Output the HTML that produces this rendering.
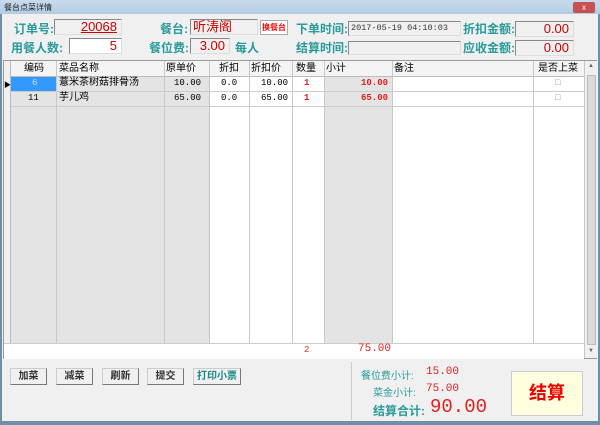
<!DOCTYPE html><html><head><meta charset="utf-8"><style>
*{margin:0;padding:0;box-sizing:border-box}
body{width:600px;height:425px;overflow:hidden;background:#6f8fa8;font-family:"Liberation Sans","Noto Sans CJK SC",sans-serif;position:relative}
div{position:absolute}
.t{font-size:12px;color:#2a9a9a;font-weight:bold;white-space:nowrap}
.box{background:#f0f0f0;border:1px solid #888;border-right-color:#ddd;border-bottom-color:#ddd;font-size:13px;text-align:right;padding-right:4px;line-height:14px;color:#c00;white-space:nowrap;overflow:hidden}
.c{border-right:1px solid #c8c8c8;top:0;bottom:0}
.cell{font-size:9px;line-height:15px;white-space:nowrap;font-family:"Liberation Mono","Noto Sans CJK SC",monospace}
.btn{top:368px;height:17px;background:#f0f0f0;border:1px solid #ccc;border-right-color:#777;border-bottom-color:#777;font-size:10px;text-align:center;line-height:15px;font-weight:bold;color:#333}
</style></head><body>
<div style="left:0;top:0;width:600px;height:14px;background:linear-gradient(#c9dced,#b3cbe2)"></div>
<div style="left:4px;top:2px;font-size:8px;color:#222">餐台点菜详情</div>
<div style="left:573px;top:2px;width:22px;height:11px;background:#c75050;border-radius:2px;color:#fff;font-size:8px;text-align:center;line-height:11px">x</div>
<div style="left:2px;top:14px;width:596px;height:407px;background:#f0f0f0"></div>
<div class="t" style="left:14px;top:20px;font-size:12px">订单号:</div>
<div class="box" style="left:54px;top:19px;width:68px;height:16px;text-decoration:underline">20068</div>
<div class="t" style="left:160px;top:20px">餐台:</div>
<div class="box" style="left:190px;top:19px;width:68px;height:16px;text-align:left;padding-left:2px">听涛阁</div>
<div style="left:260px;top:20px;width:28px;height:15px;border:1px solid #aaa;background:#fff;color:#e00;font-size:8px;font-weight:bold;line-height:13px;text-align:center;white-space:nowrap;overflow:hidden">换餐台</div>
<div class="t" style="left:296px;top:20px">下单时间:</div>
<div class="box" style="left:348px;top:21px;width:113px;height:15px;font-size:8.5px;color:#333;text-align:left;padding-left:2px;line-height:13px;font-family:'Liberation Mono',monospace">2017-05-19 04:10:03</div>
<div class="t" style="left:463px;top:20px">折扣金额:</div>
<div class="box" style="left:515px;top:21px;width:59px;height:16px">0.00</div>
<div class="t" style="left:11px;top:39px">用餐人数:</div>
<div class="box" style="left:69px;top:38px;width:53px;height:16px;background:#fff">5</div>
<div class="t" style="left:149px;top:39px">餐位费:</div>
<div class="box" style="left:190px;top:38px;width:40px;height:16px">3.00</div>
<div class="t" style="left:235px;top:39px">每人</div>
<div class="t" style="left:296px;top:39px">结算时间:</div>
<div class="box" style="left:348px;top:41px;width:113px;height:14px"></div>
<div class="t" style="left:463px;top:39px">应收金额:</div>
<div class="box" style="left:515px;top:40px;width:59px;height:16px">0.00</div>

<div style="left:3px;top:60px;width:594px;height:299px;background:#fff;border:1px solid #999">
<div style="left:7px;top:16px;width:45px;bottom:15px;background:#e4e4e4"></div>
<div style="left:52px;top:16px;width:153px;bottom:15px;background:#e4e4e4"></div>
<div style="left:320px;top:16px;width:68px;bottom:15px;background:#e4e4e4"></div>
<div style="left:0;top:0;width:580px;height:16px;background:#f4f4f4;border-bottom:1px solid #bbb"></div>
<div style="left:0;top:0;width:7px;bottom:0;background:#f0f0f0;border-right:1px solid #bbb"></div>
<div class="c" style="left:52px;width:1px"></div><div class="c" style="left:160px;width:1px"></div>
<div class="c" style="left:205px;width:1px"></div><div class="c" style="left:245px;width:1px"></div>
<div class="c" style="left:288px;width:1px"></div><div class="c" style="left:320px;width:1px"></div>
<div class="c" style="left:388px;width:1px"></div><div class="c" style="left:529px;width:1px"></div>
<div class="c" style="left:580px;width:1px"></div>
<div style="left:7px;top:30px;width:573px;border-top:1px solid #ccc"></div>
<div style="left:7px;top:45px;width:573px;border-top:1px solid #ccc"></div>
<div style="left:0;top:282px;width:580px;border-top:1px solid #ccc;height:16px;background:#fff"></div>
<div style="left:7px;top:16px;width:45px;height:14px;background:#3399ff"></div>
<div style="left:0;top:19px;font-size:7px">▶</div>
<div style="left:581px;top:0;width:12px;bottom:0;background:#f0f0f0"></div>
<div style="left:583px;top:14px;width:9px;height:270px;background:#dadada;border:1px solid #bbb"></div>
<div style="left:584px;top:2px;font-size:6px;color:#666">▲</div><div style="left:584px;top:287px;font-size:6px;color:#666">▼</div>
<div class="cell" style="top:1px;left:20px;font-size:10px">编码</div>
<div class="cell" style="top:1px;left:55px;font-size:10px">菜品名称</div>
<div class="cell" style="top:1px;left:162px;font-size:10px">原单价</div>
<div class="cell" style="top:1px;left:215px;font-size:10px">折扣</div>
<div class="cell" style="top:1px;left:247px;font-size:10px">折扣价</div>
<div class="cell" style="top:1px;left:292px;font-size:10px">数量</div>
<div class="cell" style="top:1px;left:322px;font-size:10px">小计</div>
<div class="cell" style="top:1px;left:390px;font-size:10px">备注</div>
<div class="cell" style="top:1px;left:534px;font-size:10px">是否上菜</div>
<div class="cell" style="top:15px;left:28px;color:#cde">6</div>
<div class="cell" style="top:15px;left:55px;font-size:10px">薏米茶树菇排骨汤</div>
<div class="cell" style="top:15px;left:170px">10.00</div>
<div class="cell" style="top:15px;left:217px">0.0</div>
<div class="cell" style="top:15px;left:257px">10.00</div>
<div class="cell" style="top:15px;left:300px;color:#d22;font-weight:bold">1</div>
<div class="cell" style="top:15px;left:357px;color:#d22;font-weight:bold">10.00</div>
<div class="cell" style="top:15px;left:551px;color:#999">□</div>
<div class="cell" style="top:30px;left:24px">11</div>
<div class="cell" style="top:30px;left:55px;font-size:10px">芋儿鸡</div>
<div class="cell" style="top:30px;left:170px">65.00</div>
<div class="cell" style="top:30px;left:217px">0.0</div>
<div class="cell" style="top:30px;left:257px">65.00</div>
<div class="cell" style="top:30px;left:300px;color:#d22;font-weight:bold">1</div>
<div class="cell" style="top:30px;left:357px;color:#d22;font-weight:bold">65.00</div>
<div class="cell" style="top:30px;left:551px;color:#999">□</div>
<div class="cell" style="top:282px;left:300px;color:#d22">2</div>
<div class="cell" style="top:281px;left:354px;color:#d22;font-size:11px">75.00</div>
</div>

<div style="left:351px;top:362px;width:1px;height:58px;background:#ccc"></div>
<div class="btn" style="left:10px;width:37px">加菜</div>
<div class="btn" style="left:56px;width:37px">减菜</div>
<div class="btn" style="left:102px;width:37px">刷新</div>
<div class="btn" style="left:147px;width:37px">提交</div>
<div class="btn" style="left:193px;width:48px;color:#1a8a8a">打印小票</div>
<div style="left:361px;top:367px;font-size:10px;color:#2a9a9a">餐位费小计:</div>
<div style="left:426px;top:366px;font-size:11px;color:#d22;font-family:'Liberation Mono',monospace">15.00</div>
<div style="left:373px;top:384px;font-size:10px;color:#2a9a9a">菜金小计:</div>
<div style="left:426px;top:383px;font-size:11px;color:#d22;font-family:'Liberation Mono',monospace">75.00</div>
<div style="left:373px;top:402px;font-size:12px;color:#2a9a9a;font-weight:bold">结算合计:</div>
<div style="left:430px;top:396px;font-size:19px;color:#d22;font-family:'Liberation Mono',monospace">90.00</div>
<div style="left:511px;top:371px;width:72px;height:45px;background:#ffffe0;border:1px solid #ccc;color:#e00;font-size:18px;font-weight:bold;text-align:center;line-height:43px">结算</div>
</body></html>
